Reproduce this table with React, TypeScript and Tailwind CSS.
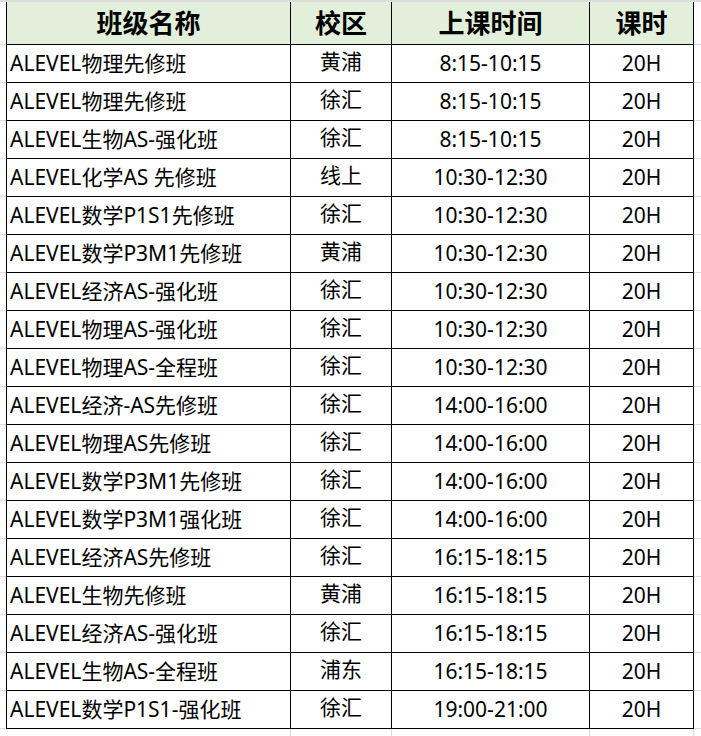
const rows: [string, string, string][] = [
  ["ALEVEL物理先修班", "黄浦", "8:15-10:15"],
  ["ALEVEL物理先修班", "徐汇", "8:15-10:15"],
  ["ALEVEL生物AS-强化班", "徐汇", "8:15-10:15"],
  ["ALEVEL化学AS 先修班", "线上", "10:30-12:30"],
  ["ALEVEL数学P1S1先修班", "徐汇", "10:30-12:30"],
  ["ALEVEL数学P3M1先修班", "黄浦", "10:30-12:30"],
  ["ALEVEL经济AS-强化班", "徐汇", "10:30-12:30"],
  ["ALEVEL物理AS-强化班", "徐汇", "10:30-12:30"],
  ["ALEVEL物理AS-全程班", "徐汇", "10:30-12:30"],
  ["ALEVEL经济-AS先修班", "徐汇", "14:00-16:00"],
  ["ALEVEL物理AS先修班", "徐汇", "14:00-16:00"],
  ["ALEVEL数学P3M1先修班", "徐汇", "14:00-16:00"],
  ["ALEVEL数学P3M1强化班", "徐汇", "14:00-16:00"],
  ["ALEVEL经济AS先修班", "徐汇", "16:15-18:15"],
  ["ALEVEL生物先修班", "黄浦", "16:15-18:15"],
  ["ALEVEL经济AS-强化班", "徐汇", "16:15-18:15"],
  ["ALEVEL生物AS-全程班", "浦东", "16:15-18:15"],
  ["ALEVEL数学P1S1-强化班", "徐汇", "19:00-21:00"],
];

const font = { fontFamily: '"Noto Sans", "Noto Sans CJK SC", sans-serif' };

export default function App() {
  return (
    <div className="w-[701px] h-[736px] bg-white overflow-hidden text-black" style={font}>
      <div className="h-[2px] bg-[#dcdcdc]" />

      {/* header */}
      <div className="flex h-[43px] text-[26px] font-bold leading-none">
        <div className="w-[6px] border-b border-[#dcdcdc]" />
        <div className="w-[285px] border-x border-b border-black bg-[#e2efda] flex items-center justify-center">班级名称</div>
        <div className="w-[101px] border-r border-b border-black bg-[#e2efda] flex items-center justify-center">校区</div>
        <div className="w-[198px] border-r border-b border-black bg-[#e2efda] flex items-center justify-center">上课时间</div>
        <div className="w-[104px] border-r border-b border-black bg-[#e2efda] flex items-center justify-center">课时</div>
        <div className="flex-1 border-b border-[#dcdcdc]" />
      </div>

      {rows.map(([name, campus, time], i) => (
        <div key={i} className="flex h-[38px] text-[21px] leading-none">
          <div className="w-[6px] border-b border-[#dcdcdc]" />
          <div className="w-[285px] border-x border-b border-black flex items-center pl-[3px] whitespace-nowrap">{name}</div>
          <div className="w-[101px] border-r border-b border-black flex items-center justify-center pb-[4px]">{campus}</div>
          <div className="w-[198px] border-r border-b border-black flex items-center justify-center">{time}</div>
          <div className="w-[104px] border-r border-b border-black flex items-center justify-center">20H</div>
          <div className="flex-1 border-b border-[#dcdcdc]" />
        </div>
      ))}

      <div className="flex h-[10px]">
        <div className="w-[6px]" />
        <div className="w-[285px] border-r border-[#dcdcdc]" />
        <div className="w-[101px] border-r border-[#dcdcdc]" />
        <div className="w-[198px] border-r border-[#dcdcdc]" />
        <div className="w-[104px] border-r border-[#dcdcdc]" />
        <div className="flex-1" />
      </div>
    </div>
  );
}
